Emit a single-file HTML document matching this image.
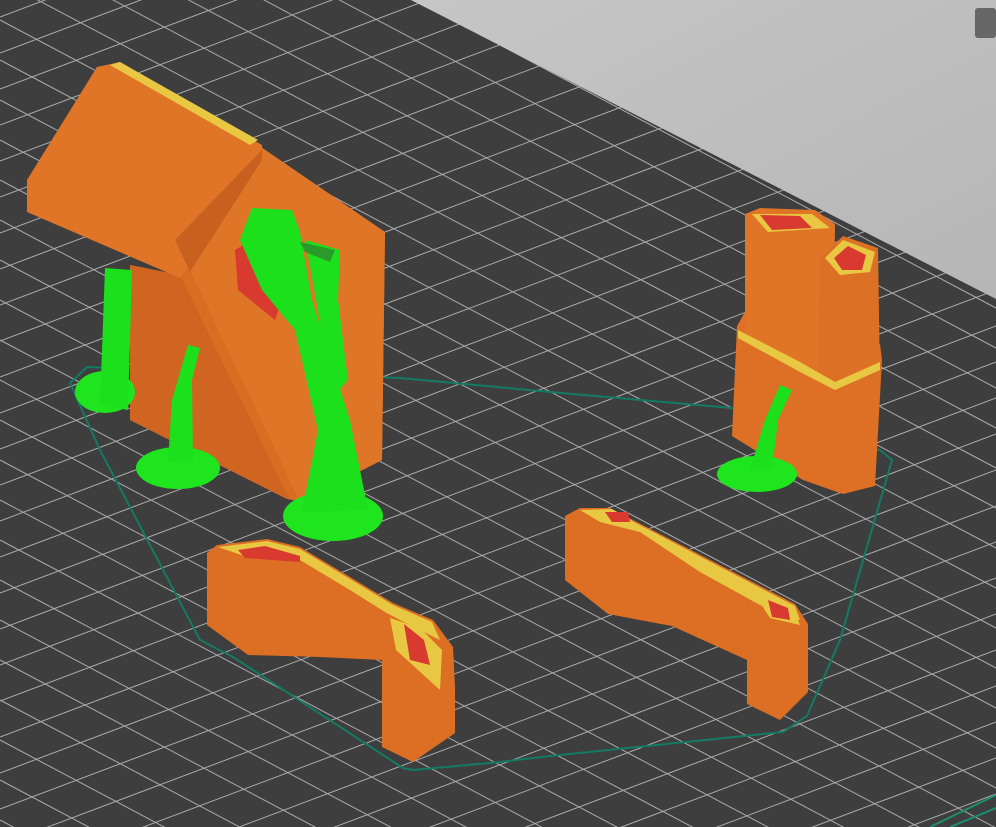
<!DOCTYPE html>
<html><head><meta charset="utf-8"><style>
html,body{margin:0;padding:0;background:#3e3e3e;width:996px;height:827px;overflow:hidden;}
svg{display:block}
</style></head><body>
<svg width="996" height="827" viewBox="0 0 996 827" xmlns="http://www.w3.org/2000/svg">
<defs>
<linearGradient id="lg" x1="0" y1="0" x2="1" y2="1">
<stop offset="0" stop-color="#c6c6c6"/><stop offset="1" stop-color="#b6b6b6"/></linearGradient>
</defs>
<rect width="996" height="827" fill="#3e3e3e"/>
<g stroke="#ababab" stroke-width="1" fill="none">
<path d="M0 -540L996 -12M0 -500L996 28M0 -460L996 68M0 -420L996 108M0 -380L996 148M0 -340L996 188M0 -300L996 228M0 -260L996 268M0 -220L996 308M0 -180L996 348M0 -140L996 388M0 -100L996 428M0 -60L996 468M0 -20L996 508M0 20L996 548M0 60L996 588M0 100L996 628M0 140L996 668M0 180L996 708M0 220L996 748M0 260L996 788M0 300L996 828M0 340L996 868M0 380L996 908M0 420L996 948M0 460L996 988M0 500L996 1028M0 540L996 1068M0 580L996 1108M0 620L996 1148M0 660L996 1188M0 700L996 1228M0 740L996 1268M0 780L996 1308M0 820L996 1348"/>
<path d="M0 17L996 -358M0 53L996 -322M0 89L996 -286M0 125L996 -250M0 161L996 -214M0 197L996 -178M0 233L996 -142M0 269L996 -106M0 305L996 -70M0 341L996 -34M0 377L996 2M0 413L996 38M0 449L996 74M0 485L996 110M0 521L996 146M0 557L996 182M0 593L996 218M0 629L996 254M0 665L996 290M0 701L996 326M0 737L996 362M0 773L996 398M0 809L996 434M0 845L996 470M0 881L996 506M0 917L996 542M0 953L996 578M0 989L996 614M0 1025L996 650M0 1061L996 686M0 1097L996 722M0 1133L996 758M0 1169L996 794M0 1205L996 830M0 1241L996 866"/>
</g>
<polygon points="411,0 996,0 996,299" fill="url(#lg)"/>
<rect x="975" y="8" width="21" height="30" rx="3" fill="#666"/>
<!-- hull -->
<path d="M87,367 L70,383 L100,450 L200,640 L233,657 L403,768 L413,770 L500,762 L550,756 L783,732 L807,716 L840,640 L892,460 L880,450 L732,408 L550,392 L400,378 L87,367 Z" fill="none" stroke="#137a64" stroke-width="2"/>
<path d="M930,827 L996,795 M950,827 L996,808" stroke="#1a9070" stroke-width="2"/>

<!-- house -->
<polygon points="130,265 180,275 258,145 385,232 382,460 300,502 285,498 130,420" fill="#d96d22"/>
<polygon points="130,265 180,275 290,500 285,498 130,420" fill="#cf6520"/>
<polygon points="258,145 385,232 382,460 300,502 190,270" fill="#df7526"/>
<polygon points="27,180 97,67 120,62 262,145 262,158 195,258 180,278 27,212" fill="#e07527"/>
<polygon points="110,65 120,62 258,140 250,145" fill="#e8c843"/>
<polygon points="175,240 262,150 262,160 190,272" fill="#c86020"/>
<polygon points="235,250 252,240 282,300 275,320 238,290" fill="#d83a30"/>
<!-- supports -->
<ellipse cx="105" cy="392" rx="30" ry="21" fill="#1ee51e"/>
<path d="M105,268 L132,270 L128,410 L100,405 Z" fill="#1be01b"/>
<ellipse cx="178" cy="468" rx="42" ry="21" fill="#1ee51e"/>
<path d="M188,345 L200,348 L192,380 L193,462 L168,462 L172,400 Z" fill="#1be01b"/>
<ellipse cx="333" cy="516" rx="50" ry="25" fill="#1ee51e"/>
<path d="M252,208 L292,210 L300,232 L312,300 L350,420 L368,510 L302,512 L318,430 L295,330 L262,290 L240,240 Z" fill="#1be01b"/>
<path d="M305,240 L340,250 L338,300 L348,380 L330,400 L318,310 Z" fill="#1be01b"/>
<path d="M300,242 L335,250 L330,262 L305,252 Z" fill="#2a9a2a"/>

<!-- right tower -->
<polygon points="737,326 745,312 810,340 835,336 880,344 882,360 875,486 843,494 803,480 732,436" fill="#dd7024"/>
<polygon points="745,214 760,208 815,210 835,224 833,378 745,335" fill="#e07527"/>
<polygon points="820,258 843,236 878,248 880,380 843,390 818,375" fill="#dc7025"/>
<polygon points="752,214 812,214 830,228 768,232" fill="#e8c843"/>
<polygon points="760,215 800,216 812,228 772,230" fill="#d83a30"/>
<polygon points="825,258 843,240 875,252 870,272 840,275" fill="#e8c843"/>
<polygon points="834,258 848,246 866,255 862,270 842,270" fill="#d83a30"/>
<polygon points="738,330 800,362 835,382 880,362 880,370 835,390 800,372 738,338" fill="#e8c843"/>
<ellipse cx="757" cy="474" rx="40" ry="18" fill="#1ee51e"/>
<path d="M780,385 L792,390 L778,420 L772,470 L750,470 L765,420 Z" fill="#1be01b"/>

<!-- left bracket -->
<polygon points="207,553 217,545 267,539 300,547 350,577 393,603 433,620 453,647 455,687 455,733 413,762 382,747 382,660 320,657 248,655 207,625" fill="#dc6f24"/>
<polygon points="218,547 267,541 300,549 350,579 393,605 432,622 440,640 400,620 385,612 350,590 300,560 250,558" fill="#e8c843"/>
<polygon points="238,550 265,546 300,556 300,562 245,558" fill="#d83a30"/>
<polygon points="390,618 420,628 442,650 440,690 418,670 396,650" fill="#e8c843"/>
<polygon points="404,624 424,640 430,665 410,660" fill="#d83a30"/>

<!-- right bracket -->
<polygon points="565,516 580,508 610,508 633,520 795,604 808,624 808,692 780,720 747,704 747,660 672,626 608,614 565,580" fill="#dc6f24"/>
<polygon points="580,510 612,509 634,522 795,606 800,620 760,605 700,572 640,532 600,522" fill="#e8c843"/>
<polygon points="605,512 628,512 630,522 612,522" fill="#d83a30"/>
<polygon points="752,590 792,605 800,625 770,618" fill="#e8c843"/>
<polygon points="768,600 788,608 790,620 772,617" fill="#d83a30"/>
</svg>
</body></html>
